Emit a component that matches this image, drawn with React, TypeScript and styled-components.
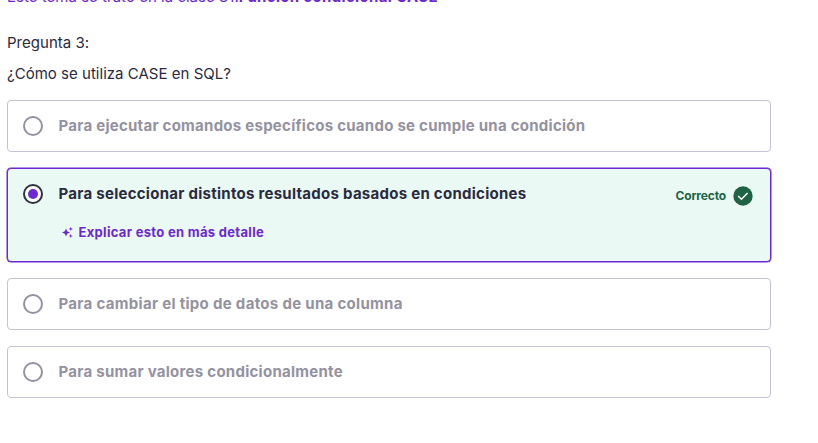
import React from 'react';
import styled, { createGlobalStyle, css } from 'styled-components';

const GlobalStyle = createGlobalStyle`
  * { box-sizing: border-box; }
  body {
    margin: 0;
    background: #fff;
    color: #2a2b3f;
    font-family: Inter, 'Liberation Sans', sans-serif;
    overflow: hidden;
  }
`;

const Page = styled.main`
  width: 818px;
  height: 443px;
  padding-left: 7px;
  overflow: hidden;
`;

const TopicNote = styled.p`
  margin: -13px 0 0;
  height: 20px;
  line-height: 20px;
  font-size: 15px;
  color: #6d28d2;
  white-space: nowrap;
`;

const Fit = styled.span<{ $spacing: number }>`
  letter-spacing: ${({ $spacing }) => $spacing}px;
`;

const TopicName = styled.strong`
  font-weight: 700;
`;

const Question = styled.section`
  margin-top: 25px;
`;

const QuestionLine = styled.p`
  margin: 0 0 9px;
  line-height: 22px;
  font-size: 15px;
  white-space: nowrap;
`;

const Answers = styled.ul`
  display: flex;
  flex-direction: column;
  gap: 16px;
  width: 764px;
  margin: 15px 0 0;
  padding: 0;
  list-style: none;
`;

const Answer = styled.li<{ $selected?: boolean }>`
  display: flex;
  align-items: flex-start;
  height: 52px;
  padding: 15px;
  border: 1px solid #c4c3d3;
  border-radius: 4px;
  color: #9492a0;
  ${({ $selected }) =>
    $selected &&
    css`
      height: 94px;
      border-color: #6d28d2;
      box-shadow: 0 0 0 0.5px #6d28d2;
      background: #eaf9f4;
      color: #2a2b3f;
    `}
`;

const Radio = styled.span<{ $checked?: boolean }>`
  display: grid;
  place-items: center;
  flex: none;
  width: 20px;
  height: 20px;
  border: 2px solid ${({ $checked }) => ($checked ? '#303141' : '#9492a0')};
  border-radius: 50%;
  background: #fff;
`;

const RadioDot = styled.span`
  width: 10px;
  height: 10px;
  border-radius: 50%;
  background: #6d28d2;
`;

const AnswerBody = styled.div`
  flex: 1;
  margin-left: 15.5px;
`;

const AnswerText = styled.div`
  line-height: 20px;
  font-size: 15px;
  font-weight: 700;
  white-space: nowrap;
`;

const ExplainButton = styled.button`
  display: flex;
  align-items: center;
  gap: 5px;
  margin: 18px 0 0 3px;
  padding: 0;
  border: 0;
  background: none;
  color: #6d28d2;
  font: 700 13px/20px Inter, 'Liberation Sans', sans-serif;
  white-space: nowrap;
`;

const Status = styled.div`
  display: flex;
  align-items: center;
  gap: 7px;
  margin: 2px 2px 0 0;
  color: #206344;
  font-size: 12px;
  font-weight: 700;
  line-height: 20px;
`;

const SparkleIcon = () => (
  <svg width="12" height="12" viewBox="0 0 12 12" fill="currentColor">
    <path d="M4 2.6 5.2 5.3l2.8 1.2-2.8 1.2L4 10.2 2.8 7.7 0 6.5 2.8 5.3z" />
    <path d="m8.7.9.6 1.4 1.5.6-1.5.6-.6 1.4-.6-1.4-1.5-.6 1.5-.6z" />
    <path d="m8.7 8 .6 1.4 1.5.6-1.5.6-.6 1.4-.6-1.4-1.5-.6 1.5-.6z" />
  </svg>
);

const CheckIcon = () => (
  <svg width="20" height="20" viewBox="0 0 20 20">
    <circle cx="10" cy="10" r="9.7" fill="#206344" />
    <path d="m5.2 10 3.2 3.2 6.2-6.2" fill="none" stroke="#fff" strokeWidth="1.4" />
  </svg>
);

const answers = [
  { text: 'Para ejecutar comandos específicos cuando se cumple una condición', spacing: 0.26 },
  { text: 'Para seleccionar distintos resultados basados en condiciones', spacing: 0.27 },
  { text: 'Para cambiar el tipo de datos de una columna', spacing: 0.31 },
  { text: 'Para sumar valores condicionalmente', spacing: 0.27 },
].map((answer, index) => ({ ...answer, correct: index === 1 }));

export default function App() {
  return (
    <>
      <GlobalStyle />
      <Page>
        <TopicNote>
          <Fit $spacing={0.02}>Este tema se trató en la clase 31:</Fit>
          <TopicName><Fit $spacing={0.33}>Función condicional CASE</Fit></TopicName>
        </TopicNote>
        <Question>
          <QuestionLine><Fit $spacing={0.03}>Pregunta 3:</Fit></QuestionLine>
          <QuestionLine><Fit $spacing={0.02}>¿Cómo se utiliza CASE en SQL?</Fit></QuestionLine>
        </Question>
        <Answers>
          {answers.map(({ text, spacing, correct }) => (
            <Answer key={text} $selected={correct}>
              <Radio $checked={correct}>{correct && <RadioDot />}</Radio>
              <AnswerBody>
                <AnswerText><Fit $spacing={spacing}>{text}</Fit></AnswerText>
                {correct && (
                  <ExplainButton>
                    <SparkleIcon />
                    <Fit $spacing={0.31}>Explicar esto en más detalle</Fit>
                  </ExplainButton>
                )}
              </AnswerBody>
              {correct && (
                <Status>
                  <Fit $spacing={-0.15}>Correcto</Fit>
                  <CheckIcon />
                </Status>
              )}
            </Answer>
          ))}
        </Answers>
      </Page>
    </>
  );
}
